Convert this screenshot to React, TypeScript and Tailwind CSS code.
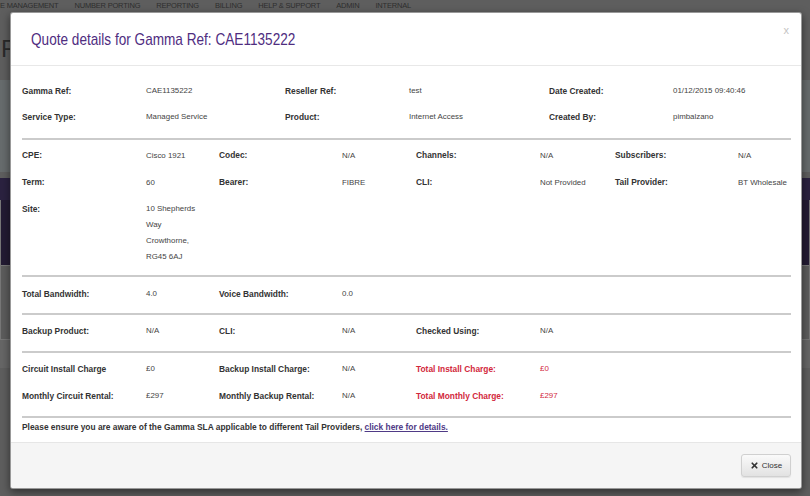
import { X } from "lucide-react";

type Pair = { label: string; value: string; red?: boolean };

const topRows: Pair[][] = [
  [
    { label: "Gamma Ref:", value: "CAE1135222" },
    { label: "Reseller Ref:", value: "test" },
    { label: "Date Created:", value: "01/12/2015 09:40:46" },
  ],
  [
    { label: "Service Type:", value: "Managed Service" },
    { label: "Product:", value: "Internet Access" },
    { label: "Created By:", value: "pimbalzano" },
  ],
];

const navItems = ["E MANAGEMENT", "NUMBER PORTING", "REPORTING", "BILLING", "HELP & SUPPORT", "ADMIN", "INTERNAL"];

const grid3 = "grid grid-cols-[124px_139px_124px_140px_124px_1fr]";
const grid4 = "grid grid-cols-[124px_73px_123px_74px_124px_75px_123px_1fr]";

function Label({ children, red }: { children: React.ReactNode; red?: boolean }) {
  return (
    <div className={`text-[8.4px] font-bold ${red ? "text-[#d2283c]" : "text-[#333]"}`}>{children}</div>
  );
}

function Value({ children, red }: { children: React.ReactNode; red?: boolean }) {
  return <div className={`text-[7.9px] ${red ? "text-[#d2283c]" : "text-[#444]"}`}>{children}</div>;
}

function Row({ pairs, cols, h }: { pairs: Pair[]; cols: string; h: string }) {
  return (
    <div className={`${cols} ${h} items-center`}>
      {pairs.map((p) => [
        <Label key={p.label + "l"} red={p.red}>
          {p.label}
        </Label>,
        <Value key={p.label + "v"} red={p.red}>
          {p.value}
        </Value>,
      ])}
    </div>
  );
}

function Rule({ mt }: { mt: string }) {
  return <div className={`${mt} h-[2px] bg-[#cbcbcb]`} />;
}

export default function App() {
  return (
    <div className="relative w-[810px] h-[496px] overflow-hidden bg-[#5e5e5e] font-['Liberation_Sans',Arial,sans-serif]">
      {/* page behind the overlay */}
      <div className="flex flex-col">
        <div className="h-[12px] flex items-center gap-[16px] text-[7.5px] text-[#2e2e2e] tracking-[-0.2px]">
          {navItems.map((n) => (
            <span key={n}>{n}</span>
          ))}
        </div>
        <div className="h-[68px] flex items-center pt-[6px] pl-[1px] text-[24px] text-[#2a2a2a]">F</div>
        <div className="h-[92px] bg-[#676c6d]" />
        <div className="h-[6px]" />
        <div className="h-[22px] bg-[#2b2240]" />
        <div className="h-[65px] bg-[#231b33] border-x border-[#777]" />
        <div className="h-[75px] border border-[#777] bg-[#5c5c5c]" />
        <div className="h-[28px] bg-[#666]" />
      </div>

      {/* modal */}
      <div className="absolute left-[10px] top-[12px] w-[792px] h-[477px] bg-white rounded-[3px] border border-black/40 shadow-[0_3px_9px_rgba(0,0,0,0.5)] flex flex-col overflow-hidden">
        <div className="h-[53px] shrink-0 border-b border-[#e8e8e8] flex items-center justify-between pl-[20px] pr-[12px]">
          <h3 className="inline-block origin-left scale-x-[0.8] text-[17px] text-[#4f2d7f] leading-none whitespace-nowrap">
            Quote details for Gamma Ref: CAE1135222
          </h3>
          <span className="text-[11px] text-[#c4c4c4] -mt-[18px]">x</span>
        </div>

        <div className="flex-1 pl-[11px] pr-[10px]">
          <div className="pt-[12px]">
            {topRows.map((r, i) => (
              <Row key={i} pairs={r} cols={grid3} h="h-[26px]" />
            ))}
          </div>
          <Rule mt="mt-[8px]" />

          <div className="pt-[2px]">
            <Row
              cols={grid4}
              h="h-[27px]"
              pairs={[
                { label: "CPE:", value: "Cisco 1921" },
                { label: "Codec:", value: "N/A" },
                { label: "Channels:", value: "N/A" },
                { label: "Subscribers:", value: "N/A" },
              ]}
            />
            <Row
              cols={grid4}
              h="h-[27px]"
              pairs={[
                { label: "Term:", value: "60" },
                { label: "Bearer:", value: "FIBRE" },
                { label: "CLI:", value: "Not Provided" },
                { label: "Tail Provider:", value: "BT Wholesale" },
              ]}
            />
            <div className={`${grid4} pt-[5px]`}>
              <div className="leading-[16px]">
                <Label>Site:</Label>
              </div>
              <div className="col-span-3 leading-[16px]">
                <Value>10 Shepherds</Value>
                <Value>Way</Value>
                <Value>Crowthorne,</Value>
                <Value>RG45 6AJ</Value>
              </div>
            </div>
          </div>
          <Rule mt="mt-[10px]" />

          <Row
            cols={grid4}
            h="h-[34px]"
            pairs={[
              { label: "Total Bandwidth:", value: "4.0" },
              { label: "Voice Bandwidth:", value: "0.0" },
            ]}
          />
          <Rule mt="mt-[2px]" />

          <Row
            cols={grid4}
            h="h-[32px]"
            pairs={[
              { label: "Backup Product:", value: "N/A" },
              { label: "CLI:", value: "N/A" },
              { label: "Checked Using:", value: "N/A" },
            ]}
          />
          <Rule mt="mt-[4px]" />

          <Row
            cols={grid4}
            h="h-[32px]"
            pairs={[
              { label: "Circuit Install Charge", value: "£0" },
              { label: "Backup Install Charge:", value: "N/A" },
              { label: "Total Install Charge:", value: "£0", red: true },
            ]}
          />
          <Row
            cols={grid4}
            h="h-[22px]"
            pairs={[
              { label: "Monthly Circuit Rental:", value: "£297" },
              { label: "Monthly Backup Rental:", value: "N/A" },
              { label: "Total Monthly Charge:", value: "£297", red: true },
            ]}
          />
          <Rule mt="mt-[9px]" />

          <div className="h-[18px] flex items-center text-[8.4px] font-bold text-[#333]">
            <span>
              Please ensure you are aware of the Gamma SLA applicable to different Tail Providers,{" "}
              <a href="#" className="text-[#4f3a86] underline">
                click here for details.
              </a>
            </span>
          </div>
        </div>

        <div className="h-[46px] shrink-0 bg-[#f5f5f5] border-t border-[#e6e6e6] flex items-center justify-end pr-[10px]">
          <button className="h-[23px] w-[50px] flex items-center justify-center gap-[3px] rounded-[3px] border border-[#d0d0d0] bg-gradient-to-b from-[#fafafa] to-[#e2e2e2] text-[8px] text-[#333] shadow-[0_1px_1px_rgba(0,0,0,0.08)]">
            <X className="w-[9px] h-[9px]" strokeWidth={4.5} />
            Close
          </button>
        </div>
      </div>
    </div>
  );
}
